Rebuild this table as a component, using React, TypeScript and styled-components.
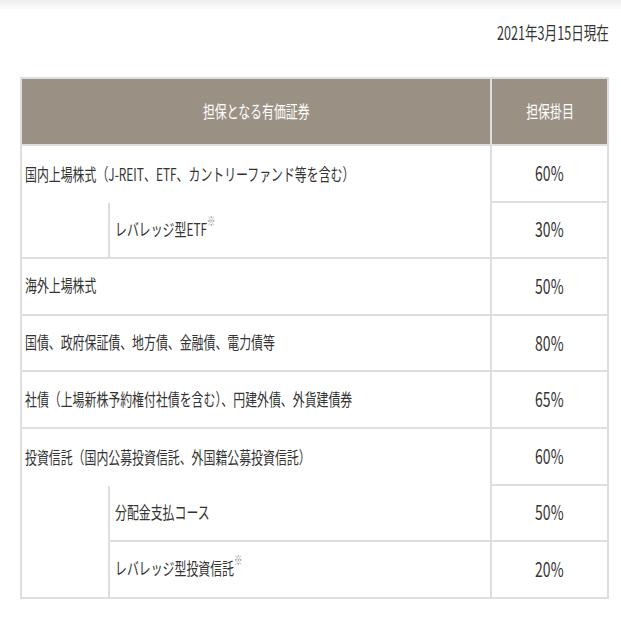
import React from "react";
import styled, { createGlobalStyle } from "styled-components";

const Global = createGlobalStyle`
  html, body { margin: 0; padding: 0; background: #ffffff; }
  body { font-family: "Noto Sans CJK JP", "Noto Sans", sans-serif; color: #333333; }
`;

const TopBand = styled.div`
  height: 9px;
  background: linear-gradient(#eeeeee, #fbfbfb);
`;

const Page = styled.div`
  padding: 0 12px 0 20px;
`;

const DateLine = styled.div`
  margin-top: 13px;
  height: 20px;
  line-height: 20px;
  font-size: 18px;
  text-align: right;
`;

const Squeeze = styled.span<{ $origin?: string }>`
  display: inline-block;
  white-space: nowrap;
  transform: scaleX(0.7);
  transform-origin: ${(p) => p.$origin || "left"} center;
`;

const Table = styled.div`
  margin-top: 35px;
  display: grid;
  grid-template-columns: 88px 382px 117px;
  grid-auto-rows: 56.6px;
  grid-template-rows: 67px;
  border-top: 2px solid #dedede;
  border-left: 2px solid #dedede;
  font-size: 17px;
`;

const HeadCell = styled.div<{ $span?: number }>`
  grid-column: span ${(p) => p.$span || 1};
  box-sizing: border-box;
  background: #9a9184;
  color: #ffffff;
  display: flex;
  align-items: center;
  justify-content: center;
  padding-bottom: 2px;
  border-right: 2px solid #dedede;
  border-bottom: 2px solid #dedede;
`;

const LabelCell = styled.div<{ $span?: number; $noBottom?: boolean }>`
  grid-column: span ${(p) => p.$span || 1};
  box-sizing: border-box;
  display: flex;
  align-items: center;
  padding-left: ${(p) => (p.$span === 2 ? 3 : 5)}px;
  padding-bottom: ${(p) => (p.$noBottom ? 1 : 3)}px;
  border-right: 2px solid #dedede;
  border-bottom: ${(p) => (p.$noBottom ? "0" : "2px solid #dedede")};
`;

const Spacer = styled.div<{ $last?: boolean }>`
  box-sizing: border-box;
  border-right: 2px solid #dedede;
  border-bottom: ${(p) => (p.$last ? "2px solid #dedede" : "0")};
`;

const ValueCell = styled.div`
  box-sizing: border-box;
  display: flex;
  align-items: center;
  justify-content: center;
  font-size: 20px;
  padding-bottom: 2px;
  border-right: 2px solid #dedede;
  border-bottom: 2px solid #dedede;
`;

const Note = styled.sup`
  font-size: 12px;
  color: #8a8a8a;
  vertical-align: top;
  position: relative;
  top: -4px;
`;

type Sub = { label: string; note?: boolean; value: string };
type Row = { label: string; value: string; subs?: Sub[] };

const rows: Row[] = [
  {
    label: "国内上場株式（J-REIT、ETF、カントリーファンド等を含む）",
    value: "60%",
    subs: [{ label: "レバレッジ型ETF", note: true, value: "30%" }],
  },
  { label: "海外上場株式", value: "50%" },
  { label: "国債、政府保証債、地方債、金融債、電力債等", value: "80%" },
  { label: "社債（上場新株予約権付社債を含む）、円建外債、外貨建債券", value: "65%" },
  {
    label: "投資信託（国内公募投資信託、外国籍公募投資信託）",
    value: "60%",
    subs: [
      { label: "分配金支払コース", value: "50%" },
      { label: "レバレッジ型投資信託", note: true, value: "20%" },
    ],
  },
];

export default function App() {
  return (
    <>
      <Global />
      <TopBand />
      <Page>
        <DateLine>
          <Squeeze $origin="right">2021年3月15日現在</Squeeze>
        </DateLine>
        <Table>
          <HeadCell $span={2}>
            <Squeeze $origin="center">担保となる有価証券</Squeeze>
          </HeadCell>
          <HeadCell>
            <Squeeze $origin="center">担保掛目</Squeeze>
          </HeadCell>
          {rows.map((r) => (
            <React.Fragment key={r.label}>
              <LabelCell $span={2} $noBottom={!!r.subs}>
                <Squeeze>{r.label}</Squeeze>
              </LabelCell>
              <ValueCell>
                <Squeeze $origin="center">{r.value}</Squeeze>
              </ValueCell>
              {r.subs?.map((s, i) => (
                <React.Fragment key={s.label}>
                  <Spacer $last={i === r.subs!.length - 1} />
                  <LabelCell>
                    <Squeeze>
                      {s.label}
                      {s.note && <Note>※</Note>}
                    </Squeeze>
                  </LabelCell>
                  <ValueCell>
                    <Squeeze $origin="center">{s.value}</Squeeze>
                  </ValueCell>
                </React.Fragment>
              ))}
            </React.Fragment>
          ))}
        </Table>
      </Page>
    </>
  );
}
